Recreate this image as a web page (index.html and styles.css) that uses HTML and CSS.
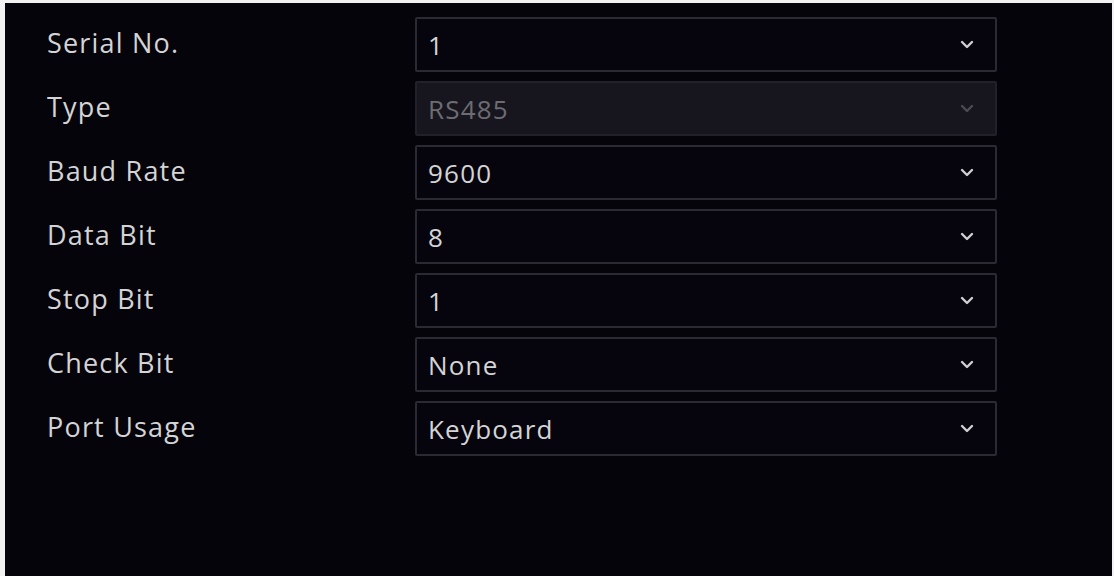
FILE: index.html
```html
<!DOCTYPE html>
<html>
<head>
<meta charset="utf-8">
<link rel="stylesheet" href="styles.css">
</head>
<body>
<div class="panel">
  <div class="form">
    <div class="row"><span class="label">Serial No.</span><div class="select"><span class="value">1</span><svg class="chev" viewBox="0 0 14 9"><path d="M2 2 L7 7 L12 2"/></svg></div></div>
    <div class="row"><span class="label">Type</span><div class="select disabled"><span class="value">RS485</span><svg class="chev" viewBox="0 0 14 9"><path d="M2 2 L7 7 L12 2"/></svg></div></div>
    <div class="row"><span class="label">Baud Rate</span><div class="select"><span class="value">9600</span><svg class="chev" viewBox="0 0 14 9"><path d="M2 2 L7 7 L12 2"/></svg></div></div>
    <div class="row"><span class="label">Data Bit</span><div class="select"><span class="value">8</span><svg class="chev" viewBox="0 0 14 9"><path d="M2 2 L7 7 L12 2"/></svg></div></div>
    <div class="row"><span class="label">Stop Bit</span><div class="select"><span class="value">1</span><svg class="chev" viewBox="0 0 14 9"><path d="M2 2 L7 7 L12 2"/></svg></div></div>
    <div class="row"><span class="label">Check Bit</span><div class="select"><span class="value">None</span><svg class="chev" viewBox="0 0 14 9"><path d="M2 2 L7 7 L12 2"/></svg></div></div>
    <div class="row"><span class="label">Port Usage</span><div class="select"><span class="value">Keyboard</span><svg class="chev" viewBox="0 0 14 9"><path d="M2 2 L7 7 L12 2"/></svg></div></div>
  </div>
</div>
</body>
</html>
```
FILE: styles.css
```css
html, body {
  margin: 0;
  padding: 0;
  background: #f2f2f2;
}
body {
  width: 1114px;
  height: 576px;
  overflow: hidden;
}
.panel {
  margin: 3px 2px 0 5px;
  height: 573px;
  background: #05040b;
  font-family: "Open Sans", "Noto Sans", sans-serif;
  color: #d4d4d6;
}
.form {
  display: flex;
  flex-direction: column;
  gap: 9px;
  padding: 14px 0 0 42px;
}
.row {
  display: flex;
  align-items: center;
  height: 55px;
}
.label {
  width: 368px;
  font-size: 27px;
  line-height: 32px;
  letter-spacing: 1.2px;
  margin-top: -3px;
}
.select {
  box-sizing: border-box;
  width: 582px;
  height: 55px;
  border: 2px solid #2b2a33;
  border-radius: 2px;
  background: #06050d;
  display: flex;
  align-items: center;
  justify-content: space-between;
  padding: 0 21px 0 11px;
}
.value {
  font-size: 26px;
  line-height: 32px;
  letter-spacing: 1.2px;
}
.chev {
  width: 14px;
  height: 9px;
  fill: none;
  stroke: #cfcfd4;
  stroke-width: 2.4;
  stroke-linecap: round;
  stroke-linejoin: round;
}
.select.disabled {
  background: #17161e;
  border-color: #22212a;
}
.select.disabled .value {
  color: #6c6c72;
}
.select.disabled .chev {
  stroke: #4a4a52;
}
```
